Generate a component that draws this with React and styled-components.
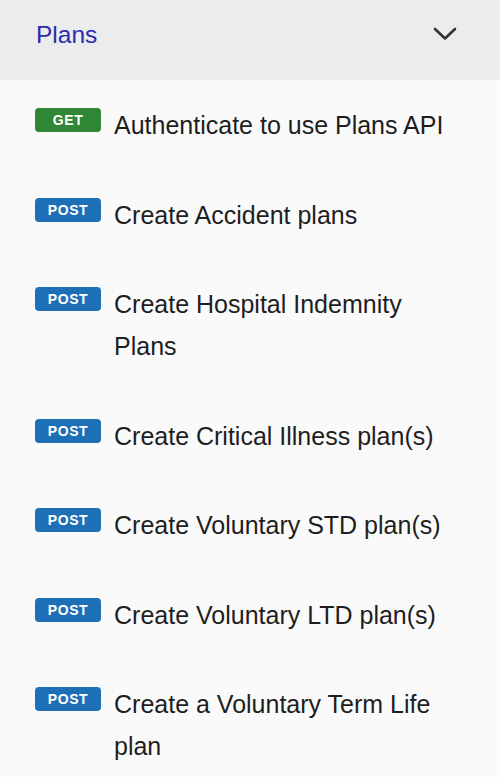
import React from 'react'
import styled, { createGlobalStyle } from 'styled-components'

const GlobalStyle = createGlobalStyle`
  html, body {
    margin: 0;
    padding: 0;
    background: #fafafa;
  }
  body {
    font-family: "Liberation Sans", Arial, sans-serif;
  }
`

const endpoints = [
  { method: 'GET', title: 'Authenticate to use Plans API' },
  { method: 'POST', title: 'Create Accident plans' },
  { method: 'POST', title: 'Create Hospital Indemnity Plans' },
  { method: 'POST', title: 'Create Critical Illness plan(s)' },
  { method: 'POST', title: 'Create Voluntary STD plan(s)' },
  { method: 'POST', title: 'Create Voluntary LTD plan(s)' },
  { method: 'POST', title: 'Create a Voluntary Term Life plan' },
]

export default function App() {
  return (
    <Wrapper>
      <GlobalStyle />
      <Header>
        <h2>Plans</h2>
        <svg width="24" height="14" viewBox="0 0 24 14" fill="none">
          <path d="M2 2 L12 11.5 L22 2" stroke="#333" strokeWidth="2.6" strokeLinecap="round" strokeLinejoin="round" />
        </svg>
      </Header>
      <List>
        {endpoints.map((e, i) => (
          <Row key={i}>
            <Badge $method={e.method}>{e.method}</Badge>
            <Title>{e.title}</Title>
          </Row>
        ))}
      </List>
    </Wrapper>
  )
}

// styled-components

const Wrapper = styled.div`
  width: 500px;
  min-height: 777px;
  background: #fafafa;
`

const Header = styled.div`
  height: 80px;
  background: #ececec;
  display: flex;
  align-items: center;
  justify-content: space-between;
  padding: 0 43px 0 36px;
  box-sizing: border-box;
  h2 {
    margin: 0;
    font-size: 24.5px;
    font-weight: 400;
    color: #2b2bab;
    margin-top: -10px;
  }
  svg {
    margin-top: -12px;
  }
`

const List = styled.div`
  display: flex;
  flex-direction: column;
`

const Row = styled.div`
  display: flex;
  align-items: flex-start;
  gap: 13px;
  padding: 24px 40px 23.5px 35px;
`

const Badge = styled.span`
  flex: none;
  width: 66px;
  height: 24px;
  margin-top: 4px;
  border-radius: 4px;
  background: ${p => (p.$method === 'GET' ? '#2f8634' : '#1d6fb6')};
  color: #fff;
  font-size: 14px;
  font-weight: 700;
  letter-spacing: 0.6px;
  display: flex;
  align-items: center;
  justify-content: center;
`

const Title = styled.div`
  font-size: 25px;
  line-height: 42px;
  color: #1e1e1e;
`
